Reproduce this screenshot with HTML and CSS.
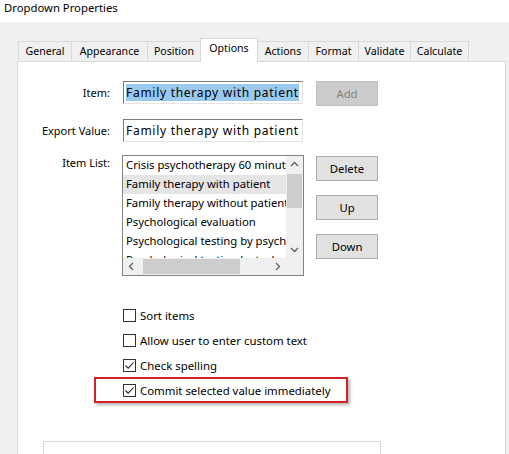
FILE: index.html
```html
<!DOCTYPE html>
<html>
<head>
<meta charset="utf-8">
<link rel="stylesheet" href="styles.css">
</head>
<body>
<div class="titlebar">Dropdown Properties</div>
<div class="main">
  <div class="tabs">
    <div class="tab w-general">General</div>
    <div class="tab w-appearance">Appearance</div>
    <div class="tab w-position">Position</div>
    <div class="tab active w-options">Options</div>
    <div class="tab w-actions">Actions</div>
    <div class="tab w-format">Format</div>
    <div class="tab w-validate">Validate</div>
    <div class="tab w-calculate">Calculate</div>
  </div>
  <div class="panel">
    <div class="form">
      <div class="row row-item">
        <label class="lbl">Item:</label>
        <div class="input"><span class="sel">Family therapy with patient</span></div>
        <button class="btn disabled">Add</button>
      </div>
      <div class="row row-export">
        <label class="lbl">Export Value:</label>
        <div class="input">Family therapy with patient</div>
      </div>
      <div class="row row-list">
        <label class="lbl lbl-list">Item List:</label>
        <div class="listbox">
          <div class="list-main">
            <div class="list-items">
              <div class="li">Crisis psychotherapy 60 minutes</div>
              <div class="li hl">Family therapy with patient</div>
              <div class="li">Family therapy without patient</div>
              <div class="li">Psychological evaluation</div>
              <div class="li">Psychological testing by psychologist</div>
              <div class="li">Psychological testing by technician</div>
            </div>
            <div class="vscroll">
              <svg class="arr" width="17" height="17" viewBox="0 0 17 17"><path d="M5 10 L8.5 6.5 L12 10" fill="none" stroke="#606060" stroke-width="1.3"/></svg>
              <div class="vthumb-track"><div class="vthumb"></div></div>
              <svg class="arr" width="17" height="17" viewBox="0 0 17 17"><path d="M5 7 L8.5 10.5 L12 7" fill="none" stroke="#606060" stroke-width="1.3"/></svg>
            </div>
          </div>
          <div class="hscroll-row">
            <div class="hscroll">
              <svg class="arr" width="17" height="17" viewBox="0 0 17 17"><path d="M10 5 L6.5 8.5 L10 12" fill="none" stroke="#606060" stroke-width="1.3"/></svg>
              <div class="hthumb-track"><div class="hthumb"></div></div>
              <svg class="arr" width="17" height="17" viewBox="0 0 17 17"><path d="M7 5 L10.5 8.5 L7 12" fill="none" stroke="#606060" stroke-width="1.3"/></svg>
            </div>
            <div class="corner"></div>
          </div>
        </div>
        <div class="btn-col">
          <button class="btn">Delete</button>
          <button class="btn">Up</button>
          <button class="btn">Down</button>
        </div>
      </div>
      <div class="checks">
        <div class="chk"><span class="box"></span>Sort items</div>
        <div class="chk"><span class="box"></span>Allow user to enter custom text</div>
        <div class="chk"><span class="box"><svg width="11" height="11" viewBox="0 0 11 11"><path d="M1.5 5.5 L4.2 8.2 L9.5 2.5" fill="none" stroke="#222" stroke-width="1.1"/></svg></span>Check spelling</div>
        <div class="chk chk-marked"><span class="box"><svg width="11" height="11" viewBox="0 0 11 11"><path d="M1.5 5.5 L4.2 8.2 L9.5 2.5" fill="none" stroke="#222" stroke-width="1.1"/></svg></span>Commit selected value immediately<span class="redbox"></span></div>
      </div>
      <div class="bottom-box"></div>
    </div>
  </div>
</div>
</body>
</html>
```
FILE: styles.css
```css
* { box-sizing: border-box; }
html, body {
  margin: 0;
  padding: 0;
  width: 509px;
  height: 454px;
  overflow: hidden;
  background: #ffffff;
  font-family: "Noto Sans", "Liberation Sans", sans-serif;
  font-size: 11px;
  color: #000;
}
.titlebar {
  height: 22px;
  padding: 0 0 0 4px;
  line-height: 15px;
  font-size: 11.3px;
  background: #fff;
}
.main {
  background: #f0f0f0;
  padding: 16px 3px 0 17px;
  height: 432px;
  display: flex;
  flex-direction: column;
}
.tabs {
  display: flex;
  align-items: flex-end;
  height: 23px;
  position: relative;
  z-index: 2;
}
.tab {
  height: 20px;
  border: 1px solid #d9d9d9;
  border-bottom: none;
  border-right: none;
  background: #f0f0f0;
  text-align: center;
  line-height: 19px;
  font-size: 10.6px;
}
.w-general { width: 53px; margin-left: 1px; }
.w-appearance { width: 76px; }
.w-position { width: 53px; }
.w-options { width: 58px; }
.w-actions { width: 50px; }
.w-format { width: 50px; }
.w-validate { width: 52px; }
.w-calculate { width: 59px; border-right: 1px solid #d9d9d9; }
.tab.active {
  height: 24px;
  background: #fff;
  border-right: 1px solid #d9d9d9;
  margin-bottom: -1px;
  line-height: 19px;
}
.tab.active + .tab { border-left: none; }
.panel {
  flex: 1;
  background: #fff;
  border: 1px solid #d9d9d9;
  border-bottom: none;
}
.form {
  padding: 19px 0 0 0;
  display: flex;
  flex-direction: column;
}
.row {
  display: flex;
  align-items: flex-start;
}
.row-item { height: 25px; }
.row-export { margin-top: 13px; }
.row-list { margin-top: 13px; }
.lbl {
  width: 92px;
  text-align: right;
  line-height: 23px;
  margin-right: 13px;
  font-size: 11px;
}
.lbl-list { line-height: 15px; }
.input {
  width: 180px;
  height: 23px;
  border-top: 1px solid #7a7a7a;
  border-left: 1px solid #7a7a7a;
  border-right: 1px solid #e3e3e3;
  border-bottom: 1px solid #e3e3e3;
  padding: 2px 0 0 2px;
  line-height: 17px;
  font-size: 12px;
  letter-spacing: 0.72px;
  white-space: nowrap;
  overflow: hidden;
}
.sel {
  background: #99c9ef;
  display: inline-block;
  line-height: 17px;
}
.btn {
  width: 62px;
  height: 25px;
  margin: 0 0 0 13px;
  padding: 0;
  background: #e1e1e1;
  border: 1px solid #adadad;
  font-family: inherit;
  font-size: 11.3px;
  color: #000;
}
.btn.disabled {
  background: #cccccc;
  border-color: #bfbfbf;
  color: #838383;
}
.listbox {
  width: 182px;
  height: 121px;
  margin-left: -1px;
  border: 1px solid #828282;
  display: flex;
  flex-direction: column;
}
.list-main {
  display: flex;
  height: 102px;
}
.list-items {
  flex: 1;
  overflow: hidden;
  padding-top: 0;
}
.li {
  height: 19px;
  line-height: 18px;
  padding-left: 3px;
  white-space: nowrap;
  overflow: hidden;
  font-size: 11.3px;
}
.li.hl { background: #e5e5e5; }
.vscroll {
  width: 17px;
  background: #f0f0f0;
  display: flex;
  flex-direction: column;
}
.arr { display: block; flex: none; }
.vthumb-track { flex: 1; padding: 1px 1px; }
.vthumb {
  height: 34px;
  background: #cdcdcd;
}
.hscroll-row { display: flex; height: 17px; }
.hscroll {
  flex: 1;
  display: flex;
  background: #f0f0f0;
}
.hthumb-track { flex: 1; padding: 1px 1px; }
.hthumb {
  width: 97px;
  height: 15px;
  margin-left: 2px;
  background: #cdcdcd;
}
.corner { width: 17px; background: #f0f0f0; }
.btn-col {
  display: flex;
  flex-direction: column;
  gap: 14px;
  padding-top: 1px;
  margin-left: -1px;
}
.checks {
  margin-top: 31px;
  margin-left: 105px;
  display: flex;
  flex-direction: column;
  gap: 8px;
}
.chk {
  display: flex;
  align-items: center;
  height: 17px;
  position: relative;
  white-space: nowrap;
  font-size: 11.4px;
}
.box {
  width: 13px;
  height: 13px;
  border: 1px solid #333;
  background: #fff;
  margin-right: 4px;
  display: flex;
  align-items: center;
  justify-content: center;
}
.box svg { display: block; }
.redbox {
  position: absolute;
  left: -29px;
  top: -5px;
  width: 254px;
  height: 26px;
  border: 2px solid #d42027;
  box-shadow: 2px 2px 3px rgba(0,0,0,0.3);
}
.bottom-box {
  margin-top: 42px;
  margin-left: 25px;
  width: 338px;
  height: 40px;
  border: 1px solid #d5d5d5;
}
```
